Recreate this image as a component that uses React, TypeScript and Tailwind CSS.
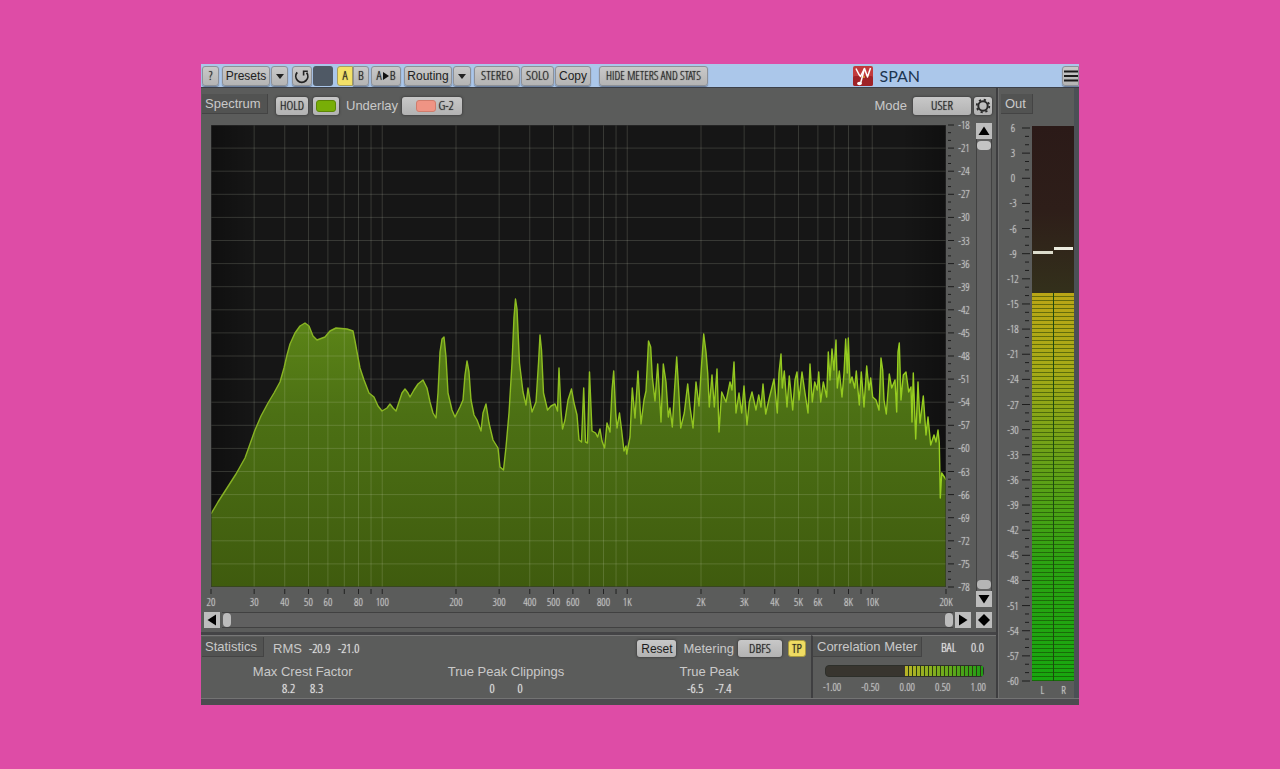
import React from "react";

const NARROW =
  "font-light font-['Open_Sans_Condensed_Light','Open_Sans_Condensed','Noto_Sans_ExtraCondensed','Liberation_Sans_Narrow','Liberation_Sans',sans-serif] [text-shadow:0_0_1px_currentColor]";
const SCALE = `${NARROW} text-[11px] text-[#c6c6c6]`;
const KEY =
  "flex shrink-0 items-center justify-center whitespace-nowrap rounded-[3px] border border-[#8d9198] bg-gradient-to-b from-[#c9c9c9] to-[#b4b4b4] text-[#222] shadow-[0_1px_1px_rgba(40,50,70,0.5)]";
const PANEL_KEY =
  "flex shrink-0 items-center justify-center whitespace-nowrap rounded-[3px] bg-gradient-to-b from-[#c8c8c8] to-[#b2b2b2] text-[#1c1c1c] shadow-[0_0_2px_1px_rgba(60,60,60,0.7)]";
const TAB =
  "flex h-5 shrink-0 items-center border-b border-r border-[#444] bg-[#525352] text-[13px] text-[#c9c9c9]";
const ARROW = "flex size-4 shrink-0 items-center justify-center bg-[#bdbdbd] text-black";
const VALUE = "text-[13px] text-[#e8e8e8]";

const SPECTRUM: number[] = [
  211, 514, 218, 502, 227, 488, 236, 474, 245, 458, 250, 444, 255, 430, 261, 416, 268, 403, 274, 393, 280, 382, 284, 368,
  287, 355, 290, 344, 295, 333, 300, 326, 305, 323, 309, 326, 313, 336, 317, 340, 325, 337, 330, 331, 336, 328, 347, 329,
  353, 331, 355, 341, 357, 352, 360, 368, 364, 380, 369, 393, 374, 397, 378, 406, 382, 411, 387, 408, 390, 404, 393, 408,
  396, 411, 399, 402, 402, 393, 405, 389, 408, 393, 410, 397, 414, 390, 418, 384, 423, 380, 427, 388, 430, 402, 433, 413,
  436, 418, 438, 393, 440, 352, 442, 339, 444, 337, 446, 357, 448, 393, 452, 410, 455, 417, 460, 407, 463, 400, 465, 375,
  467, 361, 469, 372, 471, 400, 474, 415, 477, 420, 481, 431, 483, 413, 486, 404, 489, 423, 493, 440, 498, 448, 500, 467,
  503.5, 470, 506, 447, 509, 413, 512, 363, 514, 317, 515.5, 299, 517, 309, 519.5, 363, 523, 392, 526, 405, 528, 388,
  532, 412, 536, 402, 538.5, 363, 540, 335, 541.5, 350, 543.5, 393, 547.5, 410, 551, 406, 555, 404, 557.5, 411, 559, 368,
  561, 410, 562.5, 429, 565, 420, 568, 400, 571.5, 389, 574, 403, 577, 415, 579, 440, 581.5, 442, 583.7, 388, 585.5, 442,
  587.5, 443, 589.5, 372, 592, 431, 595.6, 433, 597.6, 437, 600, 429, 602, 441, 604.6, 448, 607, 423, 610, 432, 612, 390,
  613.7, 371, 615.7, 413, 617, 428, 619.5, 413, 621.6, 430, 624, 451, 626, 446, 626.7, 454, 630, 437, 632.3, 388, 635, 418,
  638, 371, 641, 424, 644, 400, 646, 391, 648.5, 341, 650.7, 347, 652.3, 377, 655, 401, 657.7, 364, 661, 422, 663.3, 364,
  666, 382, 668.3, 417, 670, 408, 672.3, 427, 674.7, 387, 676.7, 357, 678.7, 390, 680.7, 428, 684.3, 413, 687.7, 384,
  690, 407, 693, 428, 696, 382, 699, 406, 701, 373, 703.7, 334, 706, 352, 707.7, 373, 709.3, 407, 712, 375, 714.3, 407,
  717, 369, 719, 432, 721.7, 392, 726, 402, 730, 382, 732, 390, 734, 362, 736, 413, 739, 393, 741.7, 413, 744, 386,
  747, 425, 749.3, 402, 752, 392, 756, 410, 758.7, 395, 761, 407, 763, 384, 765.7, 414, 769.3, 398, 774, 379, 777.3, 413,
  779, 373, 781, 354, 782.3, 388, 784.3, 371, 787, 407, 789.3, 376, 792.7, 410, 795, 380, 797, 372, 799, 400, 802, 372,
  805, 393, 808, 413, 810, 364, 812.3, 402, 814.7, 382, 817.3, 390, 818.7, 372, 820.7, 402, 823.3, 382, 826.7, 397,
  828.3, 352, 830, 380, 832, 349, 834, 370, 836, 340, 837.3, 388, 839.3, 371, 842, 397, 844, 373, 845.7, 339, 847.3, 373,
  848.3, 338, 850, 383, 852, 377, 854.7, 388, 856.3, 371, 859.3, 405, 861.3, 372, 864, 407, 866.7, 366, 869, 390,
  870.7, 378, 872.7, 397, 876, 400, 879, 410, 881, 358, 882.7, 370, 884, 400, 886.3, 414, 889.3, 374, 891.7, 388,
  895, 380, 896.7, 412, 898, 352, 899.3, 343, 901, 400, 903.3, 375, 906, 372, 908.7, 392, 911, 387, 912, 422, 913.3, 373,
  915.7, 439, 918, 382, 920, 423, 923.3, 396, 926, 435, 928, 417, 930.7, 445, 934, 435, 936, 442, 938, 430, 939.3, 443,
  940.3, 498, 941.7, 473, 945, 478, 946, 480,
];

const curve = SPECTRUM.reduce(
  (d, n, i) => d + (i % 2 ? " " + n : (i ? " L" : "M") + n),
  ""
);

const pct = (n: number) => `${n}%`;
const freqX = (hz: number) => (Math.log10(hz / 20) / 3) * 100;

const FREQS: [number, string][] = [
  [20, "20"], [30, "30"], [40, "40"], [50, "50"], [60, "60"], [70, ""], [80, "80"], [90, ""], [100, "100"],
  [200, "200"], [300, "300"], [400, "400"], [500, "500"], [600, "600"], [700, ""], [800, "800"], [900, ""],
  [1000, "1K"], [2000, "2K"], [3000, "3K"], [4000, "4K"], [5000, "5K"], [6000, "6K"], [7000, ""], [8000, "8K"],
  [9000, ""], [10000, "10K"], [20000, "20K"],
];

const range = (n: number) => Array.from({ length: n }, (_, i) => i);

function Chart() {
  return (
    <svg className="block h-full w-full bg-[#161616]" role="img" aria-label="Spectrum">
      <defs>
        <linearGradient id="fill" x1="0" y1="0" x2="0" y2="1">
          <stop offset="0" stopColor="#5f8918" />
          <stop offset="0.4" stopColor="#4c7014" />
          <stop offset="1" stopColor="#3f5b0e" />
        </linearGradient>
        <linearGradient id="shade" x1="0" y1="0" x2="1" y2="0">
          <stop offset="0" stopColor="#000" stopOpacity="0.3" />
          <stop offset="0.06" stopColor="#000" stopOpacity="0" />
          <stop offset="0.94" stopColor="#000" stopOpacity="0" />
          <stop offset="1" stopColor="#000" stopOpacity="0.3" />
        </linearGradient>
        <linearGradient id="trace" gradientUnits="userSpaceOnUse" x1="211" y1="0" x2="946" y2="0">
          <stop offset="0" stopColor="#86b024" />
          <stop offset="0.5" stopColor="#8fc020" />
          <stop offset="1" stopColor="#97ce20" />
        </linearGradient>
      </defs>
      <rect width="100%" height="100%" fill="url(#shade)" />
      <svg width="100%" height="100%" viewBox="211 125 735 462" preserveAspectRatio="none">
        <path d={`${curve} L946 587 L211 587 Z`} fill="url(#fill)" />
      </svg>
      <g stroke="#dfe8cf" strokeOpacity="0.17">
        {range(19).map((i) => (
          <line key={i} x1="0" x2="100%" y1={pct((i + 1) * 5)} y2={pct((i + 1) * 5)} />
        ))}
        {FREQS.slice(1, -1).map(([hz]) => (
          <line key={hz} y1="0" y2="100%" x1={pct(freqX(hz))} x2={pct(freqX(hz))} />
        ))}
      </g>
      <svg width="100%" height="100%" viewBox="211 125 735 462" preserveAspectRatio="none">
        <path d={curve} fill="none" stroke="url(#trace)" strokeWidth="1.4" strokeLinejoin="round" vectorEffect="non-scaling-stroke" />
      </svg>
      <rect width="100%" height="100%" fill="none" stroke="#333" />
    </svg>
  );
}

function LevelAxis() {
  return (
    <svg className={`block h-full w-full overflow-visible ${SCALE}`} aria-label="Level in decibels">
      {range(61).map((i) => (
        <line key={i} x1="2" x2={i % 3 ? 5 : 8} y1={pct((i / 60) * 100)} y2={pct((i / 60) * 100)} stroke="#1d1d1d" />
      ))}
      {range(21).map((i) => (
        <text key={i} x="18" y={pct(i * 5)} dy="4" textAnchor="middle" fill="currentColor">
          {-18 - i * 3}
        </text>
      ))}
    </svg>
  );
}

function FreqAxis() {
  return (
    <svg className={`block h-6 w-full overflow-visible ${SCALE}`} aria-label="Frequency in hertz">
      {FREQS.map(([hz, label]) => (
        <g key={hz}>
          <line x1={pct(freqX(hz))} x2={pct(freqX(hz))} y1="2" y2="7" stroke="#222" />
          <text x={pct(freqX(hz))} y="19" textAnchor="middle" fill="currentColor">
            {label}
          </text>
        </g>
      ))}
    </svg>
  );
}

function OutScale() {
  return (
    <svg className={`block h-full w-full overflow-visible ${SCALE}`} aria-label="Output level in decibels">
      {range(67).map((i) => (
        <line key={i} x1={i % 3 ? 26 : 23} x2={i % 3 ? 30 : 31} y1={pct((i / 66) * 100)} y2={pct((i / 66) * 100)} stroke="#1d1d1d" />
      ))}
      {range(23).map((i) => (
        <text key={i} x="14" y={pct((i / 22) * 100)} dy="4" textAnchor="middle" fill="currentColor">
          {6 - i * 3}
        </text>
      ))}
    </svg>
  );
}

function Triangle({ d }: { d: string }) {
  return (
    <svg className="size-3" viewBox="0 0 12 12" aria-hidden="true">
      <path d={d} fill="currentColor" />
    </svg>
  );
}

function Toolbar() {
  return (
    <header className="flex h-[23px] items-center bg-[#abc7ea] pl-px text-[12px]">
      <button className={`${KEY} ${NARROW} h-5 w-[17px] text-[13px]`}>?</button>
      <div className="ml-[3px] flex gap-px">
        <button className={`${KEY} h-5 w-12`}>Presets</button>
        <button className={`${KEY} h-5 w-[17px]`} aria-label="Preset menu">
          <Triangle d="M2 4H10L6 9Z" />
        </button>
      </div>
      <div className="ml-1 flex gap-px">
        <button className={`${KEY} h-5 w-5`} aria-label="Undo">
          <svg className="h-4 w-4" viewBox="0 0 16 16" fill="none" stroke="currentColor" strokeWidth="1.8" aria-hidden="true">
            <path d="M3.2 4.4A6 6 0 1 0 12.6 4.6" />
            <path d="M13.8 3.200H9.600V7.600" strokeWidth="1.600" />
          </svg>
        </button>
        <button className="h-5 w-5 rounded-[3px] bg-[#4f5965]" aria-label="Redo" />
      </div>
      <div className="ml-1 flex">
        <button className={`${NARROW} flex h-5 w-4 items-center justify-center rounded-l-[3px] border border-[#a8a060] bg-[#f3e168] text-[13px] text-[#222]`}>A</button>
        <button className={`${KEY} ${NARROW} h-5 w-4 rounded-l-none text-[13px]`}>B</button>
      </div>
      <button className={`${KEY} ${NARROW} ml-[2px] h-5 w-[30px] text-[13px]`}>
        A
        <svg className="mx-px h-2 w-1.5" viewBox="0 0 6 8" aria-hidden="true">
          <path d="M0 0L6 4L0 8Z" fill="#111" />
        </svg>
        B
      </button>
      <div className="ml-[3px] flex gap-px">
        <button className={`${KEY} h-5 w-12`}>Routing</button>
        <button className={`${KEY} h-5 w-[18px]`} aria-label="Routing menu">
          <Triangle d="M2 4H10L6 9Z" />
        </button>
      </div>
      <div className="ml-[3px] flex gap-px">
        <button className={`${KEY} ${NARROW} h-5 w-[46px] text-[13px]`}>STEREO</button>
        <button className={`${KEY} ${NARROW} h-5 w-[33px] text-[13px]`}>SOLO</button>
        <button className={`${KEY} h-5 w-9`}>Copy</button>
      </div>
      <button className={`${KEY} ${NARROW} ml-2 h-5 w-[109px] text-[12px]`}>HIDE METERS AND STATS</button>
      <div className="ml-auto flex items-center gap-1.5 pr-[142px]">
        <svg className="size-5" viewBox="0 0 20 20" aria-hidden="true">
          <rect width="20" height="20" rx="2" fill="#c23a3c" />
          <rect y="10" width="20" height="10" rx="2" fill="#9f2227" />
          <g fill="none" stroke="#fff" strokeWidth="1.5" strokeLinejoin="round">
            <path d="M3 2.5C4.500 5.500 5.500 8.500 7.500 10.500L11.500 2.500L14.500 11L17.500 2" />
            <path d="M11.500 2.500L7.500 17.500" />
          </g>
          <ellipse cx="6.500" cy="17.500" rx="2.400" ry="1.700" fill="#fff" />
          <circle cx="11" cy="11" r="1" fill="#e8a33c" />
        </svg>
        <span className="font-['Lato','Liberation_Sans',sans-serif] text-[16px] leading-5 text-[#1d3550]">SPAN</span>
      </div>
      <button className={`${KEY} h-5 w-[17px] rounded-r-none`} aria-label="Menu">
        <svg className="h-3 w-3.5" viewBox="0 0 14 12" stroke="#1c1c1c" strokeWidth="2" aria-hidden="true">
          <path d="M0 1.500H14M0 6H14M0 10.500H14" />
        </svg>
      </button>
    </header>
  );
}

function SpectrumPanel() {
  return (
    <section>
      <div className="flex h-[35px] items-start pl-px pr-1 pt-[6px] text-[13px] text-[#c9c9c9]">
        <h2 className={`${TAB} w-[66px] pl-[3px]`}>Spectrum</h2>
        <div className="mt-[2px] flex h-[20px] flex-1 items-center pl-2">
          <button className={`${PANEL_KEY} ${NARROW} h-[18px] w-8 text-[13px]`}>HOLD</button>
          <button className={`${PANEL_KEY} ml-[5px] h-[18px] w-[26px]`} aria-label="Spectrum colour">
            <span className="h-3 w-5 rounded-[3px] border border-[#5c8606] bg-[#78ae07]" />
          </button>
          <span className="ml-[7px]">Underlay</span>
          <button className={`${PANEL_KEY} ${NARROW} ml-1 h-[18px] w-[60px] gap-0.5 pl-1.5 text-[13px]`}>
            <span className="h-3 w-5 rounded-[3px] border border-[#cf7c6c] bg-[#ef9484]" />
            G-2
          </button>
          <span className="ml-auto">Mode</span>
          <button className={`${PANEL_KEY} ${NARROW} ml-1.5 h-[18px] w-[58px] text-[13px]`}>USER</button>
          <button className={`${PANEL_KEY} ml-[3px] h-[18px] w-[18px]`} aria-label="Settings">
            <svg className="size-4" viewBox="0 0 16 16" fill="none" stroke="#2a2a2a" aria-hidden="true">
              <circle cx="8" cy="8" r="4.700" strokeWidth="2" />
              <circle cx="8" cy="8" r="6.300" strokeWidth="1.800" strokeDasharray="2.200 2.748" />
            </svg>
          </button>
        </div>
      </div>
      <div className="flex pl-2.5 pr-1">
        <div className="min-w-0 flex-1 pt-[2px]">
          <div className="flex h-[462px]">
            <div className="min-w-0 flex-1">
              <Chart />
            </div>
            <div className="w-[30px] shrink-0">
              <LevelAxis />
            </div>
          </div>
          <div className="pr-[30px]">
            <FreqAxis />
          </div>
        </div>
        <div className="flex w-4 shrink-0 flex-col pb-1">
          <button className={ARROW} aria-label="Raise range">
            <Triangle d="M0.500 10H11.500L6 1.500Z" />
          </button>
          <div className="flex flex-1 flex-col justify-between border-x border-[#414141] bg-[#606060] py-[2px]">
            <button className="h-[9px] rounded-sm bg-[#c4c4c4]" aria-label="Top of range" />
            <button className="h-[9px] rounded-sm bg-[#b5b5b5]" aria-label="Bottom of range" />
          </div>
          <button className={ARROW} aria-label="Lower range">
            <Triangle d="M0.500 2H11.500L6 10.500Z" />
          </button>
        </div>
      </div>
      <div className="flex h-[21px] items-start gap-0.5 pl-[3px] pr-1 pt-px">
        <button className={ARROW} aria-label="Scroll left">
          <Triangle d="M10 0.500V11.500L1.500 6Z" />
        </button>
        <div className="flex h-4 flex-1 justify-between border-y border-[#414141] bg-[#606060] pl-px">
          <button className="w-2 rounded-sm bg-[#bcbcbc]" aria-label="Start of range" />
          <button className="w-2 rounded-sm bg-[#bcbcbc]" aria-label="End of range" />
        </div>
        <button className={ARROW} aria-label="Scroll right">
          <Triangle d="M2 0.500V11.500L10.500 6Z" />
        </button>
        <button className={`${ARROW} ml-[3px]`} aria-label="Reset range">
          <Triangle d="M6 0L12 6L6 12L0 6Z" />
        </button>
      </div>
    </section>
  );
}

function Stat({ name, values }: { name: string; values: string[] }) {
  return (
    <div className="flex flex-col items-center">
      <dt className="text-[13px] leading-[17px] text-[#c9c9c9]">{name}</dt>
      <dd className={`${VALUE} ${NARROW} flex leading-[17px]`}>
        {values.map((v, i) => (
          <span key={i} className="w-7 text-center">
            {v}
          </span>
        ))}
      </dd>
    </div>
  );
}

function StatisticsPanel() {
  return (
    <section className="min-w-0 flex-1 border-t border-[#777] pt-px">
      <div className="flex items-start pl-px pr-[5px] text-[13px] text-[#c9c9c9]">
        <h2 className={`${TAB} w-[62px] pl-[3px]`}>Statistics</h2>
        <div className="mt-px flex h-[21px] flex-1 items-center pl-[9px]">
          <span>RMS</span>
          <span className={`${VALUE} ${NARROW} ml-[7px] w-[29px]`}>-20.9</span>
          <span className={`${VALUE} ${NARROW}`}>-21.0</span>
          <button className={`${PANEL_KEY} ml-auto h-[17px] w-[39px] text-[12px]`}>Reset</button>
          <span className="ml-[7px]">Metering</span>
          <button className={`${PANEL_KEY} ${NARROW} ml-1 h-[17px] w-11 text-[13px]`}>DBFS</button>
          <button className={`${NARROW} ml-1.5 flex h-[17px] w-[18px] items-center justify-center rounded-[3px] border border-[#a89a40] bg-[#f0dc62] text-[13px] text-[#1c1c1c]`}>TP</button>
        </div>
      </div>
      <dl className="mt-1 grid grid-cols-3">
        <Stat name="Max Crest Factor" values={["8.2", "8.3"]} />
        <Stat name="True Peak Clippings" values={["0", "0"]} />
        <Stat name="True Peak" values={["-6.5", "-7.4"]} />
      </dl>
    </section>
  );
}

function CorrelationPanel() {
  return (
    <section className="w-[185px] shrink-0 border-l-2 border-t border-l-[#3f3f41] border-t-[#777] pt-px">
      <div className="flex items-start">
        <h2 className={`${TAB} w-[109px] whitespace-nowrap pl-1`}>Correlation Meter</h2>
        <div className={`${VALUE} ${NARROW} flex h-[22px] flex-1 items-center justify-between pl-[19px] pr-3`}>
          <span>BAL</span>
          <span>0.0</span>
        </div>
      </div>
      <div className="mx-3 mt-[6px] flex h-3 rounded-sm border border-[#2d2f2a] bg-[#38352f]">
        <div className="flex-1" />
        <div className="flex-1 bg-[repeating-linear-gradient(90deg,transparent_0_3px,#2c3a14_3px_4px),linear-gradient(90deg,#b9b427,#7fae1e_40%,#1f9c14)]" />
      </div>
      <div className={`${SCALE} mx-2.5 mt-0.5 flex justify-between leading-4`}>
        <span>-1.00</span>
        <span>-0.50</span>
        <span>0.00</span>
        <span>0.50</span>
        <span>1.00</span>
      </div>
    </section>
  );
}

function OutPanel() {
  return (
    <section className="flex w-[80px] shrink-0 flex-col border-r-[5px] border-r-[#4b5055]">
      <div className="h-10 pl-0.5 pt-[6px]">
        <h2 className={`${TAB} w-8 pl-1`}>Out</h2>
      </div>
      <div className="flex flex-1">
        <div className="w-[33px] shrink-0">
          <OutScale />
        </div>
        <div className="-mt-0.5 flex min-w-0 flex-1 flex-col">
          <div className="flex h-[167px] gap-px bg-gradient-to-b from-[#2b1a18] via-[#2e1e19] to-[#33301b] px-px">
            <div className="flex-1 pt-[125px]">
              <div className="h-[3px] bg-[#dcdccc]" />
            </div>
            <div className="flex-1 pt-[121px]">
              <div className="h-[3px] bg-[#ecece0]" />
            </div>
          </div>
          <div className="flex flex-1 gap-px bg-[#1d4a10]">
            <div className="flex-1 bg-[repeating-linear-gradient(180deg,transparent_0_3px,rgba(20,50,0,0.5)_3px_4px),linear-gradient(180deg,#baa616,#a6aa17_20%,#6ba118_42%,#2ba312_70%,#18a70f)]" />
            <div className="flex-1 bg-[repeating-linear-gradient(180deg,transparent_0_3px,rgba(20,50,0,0.5)_3px_4px),linear-gradient(180deg,#baa616,#a6aa17_20%,#6ba118_42%,#2ba312_70%,#18a70f)]" />
          </div>
        </div>
      </div>
      <div className={`${SCALE} flex h-[17px] pl-[33px] text-center leading-[18px]`}>
        <span className="flex-1">L</span>
        <span className="flex-1">R</span>
      </div>
    </section>
  );
}

export default function App() {
  return (
    <div className="min-h-screen bg-[#de4ca6] px-[201px] py-16 font-['Liberation_Sans',Arial,sans-serif]">
      <main className="overflow-hidden bg-[#4c4b50]">
        <Toolbar />
        <div className="flex border-t border-[#3c4048] bg-[#5b5c5b]">
          <div className="min-w-0 flex-1">
            <SpectrumPanel />
            <div className="flex h-[66px] border-t-[3px] border-[#444446]">
              <StatisticsPanel />
              <CorrelationPanel />
            </div>
          </div>
          <div className="w-[3px] shrink-0 border-r border-[#6e6e6e] bg-[#3e3e40]" />
          <OutPanel />
        </div>
        <div className="h-[7px] border-t border-[#737373] bg-[#4c4b50]" />
      </main>
    </div>
  );
}
